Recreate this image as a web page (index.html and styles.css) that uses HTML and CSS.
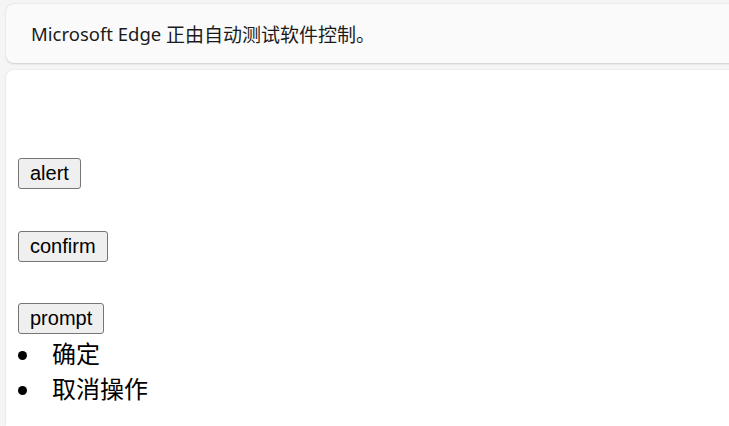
FILE: index.html
```html
<!DOCTYPE html>
<html lang="zh-CN">
<head>
<meta charset="utf-8">
<title>Alerts</title>
<link rel="stylesheet" href="styles.css">
</head>
<body>
<div class="frame">
  <div class="infobar">Microsoft Edge <span class="cjk">正由自动测试软件控制。</span></div>
  <div class="page">
    <div class="buttons">
      <button class="btn">alert</button>
      <button class="btn">confirm</button>
      <button class="btn">prompt</button>
    </div>
    <ul class="results">
      <li class="item">确定</li>
      <li class="item">取消操作</li>
    </ul>
  </div>
</div>
</body>
</html>
```

FILE: styles.css
```css
html, body {
  margin: 0;
  padding: 0;
  height: 100%;
  overflow: hidden;
}
body {
  background: #f5f5f5;
}
.frame {
  display: flex;
  flex-direction: column;
  gap: 7px;
  padding: 4px 0 0 6px;
  height: 100%;
  box-sizing: border-box;
}
.infobar {
  height: 59px;
  box-sizing: border-box;
  margin-right: -12px;
  background: #fafafa;
  border-radius: 8px;
  box-shadow: 0 0.5px 2px rgba(0,0,0,0.16);
  padding: 0 0 0 25px;
  display: flex;
  align-items: center;
  white-space: pre;
  font-family: "Noto Sans", "Noto Sans CJK SC", sans-serif;
  font-size: 18.5px;
  color: #1b1b1b;
}
.cjk {
  font-size: 19px;
}
.page {
  flex: 1;
  margin-right: -12px;
  background: #ffffff;
  border-radius: 8px 8px 0 0;
  box-shadow: 0 0 2px rgba(0,0,0,0.12);
  padding: 88px 12px 0 12px;
}
.buttons {
  display: flex;
  flex-direction: column;
  align-items: flex-start;
  gap: 41.5px;
}
.btn {
  font-family: "Liberation Sans", Arial, sans-serif;
  font-size: 20px;
  line-height: 23px;
  color: #000;
  background: #efefef;
  border: 1px solid #767676;
  border-radius: 3px;
  padding: 3px 11px;
  margin: 0;
}
.results {
  list-style: none;
  margin: 1px 0 0 0;
  padding: 0;
  font-family: "Noto Sans CJK SC", sans-serif;
  font-size: 24px;
  line-height: 35px;
  color: #000;
}
.item {
  display: flex;
  align-items: center;
}
.item::before {
  content: "";
  width: 9px;
  height: 9px;
  border-radius: 50%;
  background: #000;
  margin: 5px 25px 0 0;
  flex: none;
}
```
